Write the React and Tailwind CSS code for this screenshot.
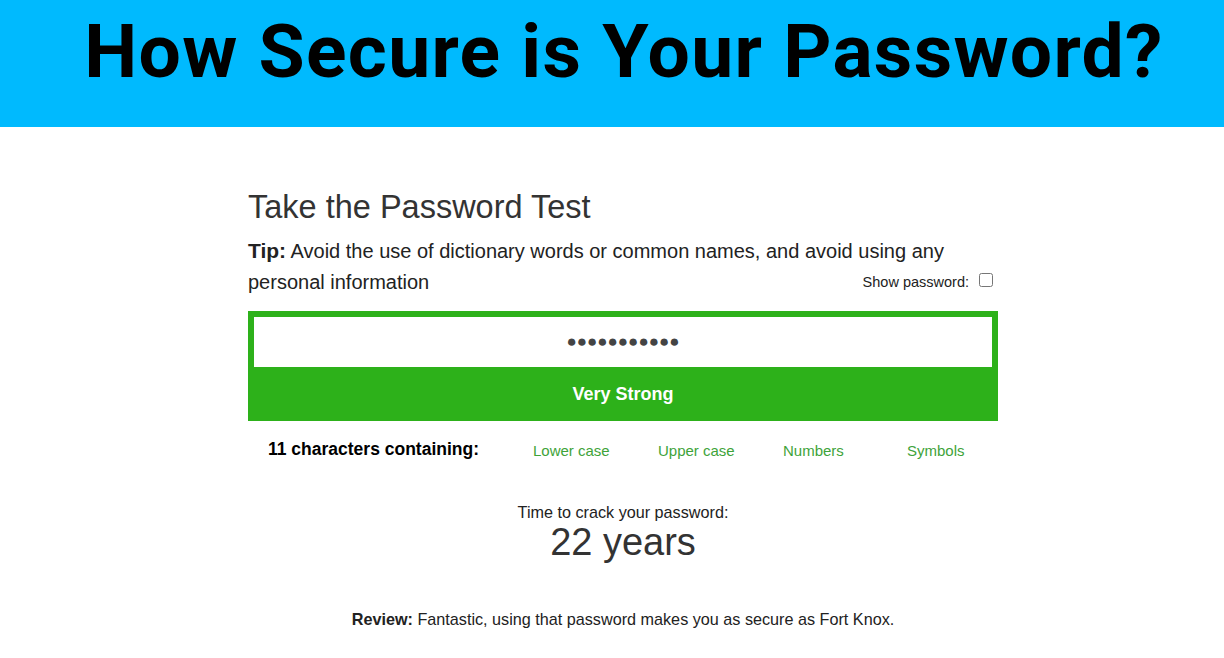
import { useState } from 'react'

export default function App() {
  const [show, setShow] = useState(false)
  const pw = 'Fx9#kQ2!mZr'

  return (
    <div className="min-h-[658px] bg-white font-['Liberation_Sans',Arial,sans-serif]">
      {/* Banner */}
      <div className="h-[127px] bg-[#00bafe] flex items-start justify-center pt-[6px] pl-[24px]">
        <h1 className="text-[75px] leading-[90px] font-bold tracking-[1.3px] text-black font-['Roboto',sans-serif]">
          How Secure is Your Password?
        </h1>
      </div>

      <div className="w-[750px] ml-[248px] pt-[60px]">
        <h2 className="text-[32.5px] leading-[40px] text-[#333]">Take the Password Test</h2>

        <div className="mt-[8px] text-[20px] leading-[31px] text-[#222]">
          <div>
            <b className="text-[21px]">Tip:</b> Avoid the use of dictionary words or common names, and avoid using any
          </div>
          <div className="flex items-center justify-between">
            <span>personal information</span>
            <label className="flex items-center gap-[10px] pr-[5px]">
              <span className="text-[14.5px] text-[#222]">Show password:</span>
              <input
                type="checkbox"
                checked={show}
                onChange={() => setShow(s => !s)}
                className="w-[14px] h-[14px] -mt-[6px]"
              />
            </label>
          </div>
        </div>

        {/* Strength box */}
        <div className="bg-[#2db11a] px-[6px] pt-[6px] mt-[13px]">
          <div className="h-[50px] bg-white flex items-center justify-center text-[#444] text-[17px]">
            {show ? pw : '●●●●●●●●●●●'}
          </div>
          <div className="h-[54px] flex items-center justify-center text-white font-bold text-[18px]">
            Very Strong
          </div>
        </div>

        {/* Criteria */}
        <div className="flex items-center h-[60px] text-[15px]">
          <div className="w-[285px] pl-[20px] font-bold text-[17.5px] text-black -mt-[4px]">11 characters containing:</div>
          <div className="flex text-[#3ea33a]">
            <span className="w-[125px]">Lower case</span>
            <span className="w-[125px]">Upper case</span>
            <span className="w-[124px]">Numbers</span>
            <span>Symbols</span>
          </div>
        </div>

        <div className="text-center mt-[21px] text-[#222]">
          <div className="text-[16.2px] leading-[20px]">Time to crack your password:</div>
          <div className="text-[38px] leading-[40px] text-[#333]">22 years</div>
        </div>

        <p className="text-center text-[16.2px] text-[#222] mt-[45px]">
          <b>Review:</b> Fantastic, using that password makes you as secure as Fort Knox.
        </p>
      </div>
    </div>
  )
}
